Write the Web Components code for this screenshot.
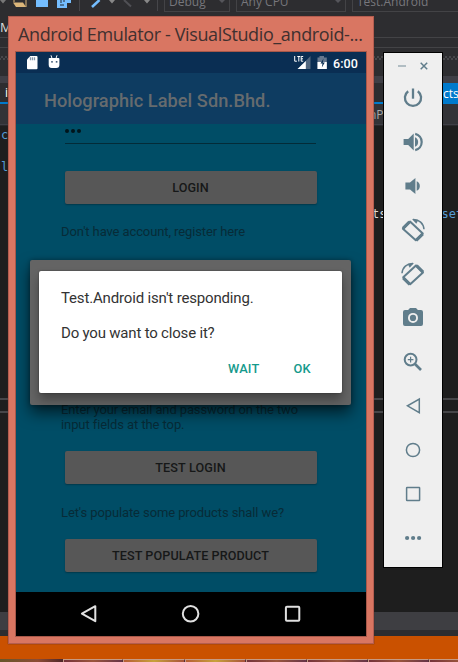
<!DOCTYPE html>
<html lang="en">
<head>
<meta charset="utf-8">
<title>Android Emulator</title>
<style>
html,body{margin:0;width:458px;height:662px;overflow:hidden;background:#1e1e1e}
</style>
</head>
<body>
<desk-top></desk-top>
<script>
const define = (name, html, after) => customElements.define(name, class extends HTMLElement {
  constructor() {
    super();
    const t = document.createElement('template');
    t.innerHTML = html;
    this.attachShadow({mode: 'open'}).append(t.content.cloneNode(true));
  }
  connectedCallback() { if (after) after(this); }
});

// A single line of text, tracked so that it spans the width given in "w".
define('fit-text', `<style>:host{display:inline-block;white-space:pre}</style><span><slot></slot></span>`, el => {
  const w = parseFloat(el.getAttribute('w'));
  const n = el.textContent.length;
  const now = el.shadowRoot.querySelector('span').getBoundingClientRect().width;
  if (now) { el.style.letterSpacing = (w - now) / n + 'px'; }
});

const icons = {
  power: '<g fill="none" stroke="currentColor" stroke-width="2.3"><path d="M7.2 5.2A8.1 8.1 0 1 0 16.8 5.2"/><path d="M12 2.5v10.2"/></g>',
  louder: '<g fill="currentColor"><path d="M2.6 8.9h4.6L12.7 3.6v16.8L7.2 15.1H2.6z"/><path d="M14 7.2c4.2 1.4 4.2 8.200 0 9.600z"/></g><path d="M14.2 3.9a8.300 8.300 0 0 1 0 16.2" fill="none" stroke="currentColor" stroke-width="2.2"/>',
  quieter: '<g fill="currentColor"><path d="M4.4 8.600h4.600L14.400 3.900v16.2L9 15.400H4.400z"/><path d="M15.700 7.200c4.200 1.400 4.200 8.200 0 9.600z"/></g>',
  left: '<g fill="none" stroke="currentColor"><path d="M9 3.600L1.900 10.700L14.800 22.300L21.800 15.400z" stroke-width="2" stroke-linejoin="round"/><path d="M8.500 3.800L2 10.300M21.800 15.800L15.200 22.300" stroke-width="3.200"/><path d="M12 1.500C18 1.200 22.600 5.600 23 11.200" stroke-width="1.500"/></g><path d="M11 1l6.300 1.100-2 3.700z" fill="currentColor"/>',
  right: '<g fill="none" stroke="currentColor"><path d="M15 3.400L22 10.400L9.200 22.300L2.200 15.300z" stroke-width="2" stroke-linejoin="round"/><path d="M15.500 3.600L22 10.100M2.200 15.800L8.800 22.300" stroke-width="3.200"/><path d="M12 1.500C6 1.200 1.400 5.600 1 11.200" stroke-width="1.500"/></g><path d="M13 1L6.700 2.100l2 3.700z" fill="currentColor"/>',
  camera: '<path fill="currentColor" fill-rule="evenodd" d="M9 2h6l1.900 2H20q2 0 2 2v12q0 2-2 2H4q-2 0-2-2V6q0-2 2-2h3.100zM12 6.900a5 5 0 1 0 0 10a5 5 0 0 0 0-10z"/><circle cx="12" cy="11.900" r="3.100" fill="currentColor"/>',
  zoom: '<g fill="none" stroke="currentColor"><circle cx="9.600" cy="9.600" r="5.900" stroke-width="2"/><path d="M14 14l6 6" stroke-width="2.600"/><path d="M6.800 9.600h5.600M9.600 6.800v5.600" stroke-width="1.200"/></g>',
  back: '<path d="M18.300 5v13.600L6.500 11.800z" fill="none" stroke="currentColor" stroke-width="1.500"/>',
  home: '<circle cx="12" cy="12" r="6.600" fill="none" stroke="currentColor" stroke-width="1.500"/>',
  square: '<rect x="5.600" y="5.500" width="13" height="13" rx=".5" fill="none" stroke="currentColor" stroke-width="1.500"/>',
  more: '<g fill="currentColor"><circle cx="6.100" cy="12" r="2.100"/><circle cx="12.100" cy="12" r="2.100"/><circle cx="18.100" cy="12" r="2.100"/></g>',
  navback: '<path d="M18.300 4.200v15L4.900 11.700z" fill="none" stroke="currentColor" stroke-width="2" stroke-linejoin="round"/>',
  navhome: '<circle cx="11.600" cy="11.700" r="7.800" fill="none" stroke="currentColor" stroke-width="2"/>',
  navsquare: '<rect x="4.900" y="4.700" width="13.400" height="14" rx="1" fill="none" stroke="currentColor" stroke-width="2"/>',
};
define('line-icon', `<style>:host{display:block;width:24px;height:24px}svg{display:block}</style>`, el => {
  el.shadowRoot.innerHTML += `<svg width="24" height="24" viewBox="0 0 24 24">${icons[el.getAttribute('name')]}</svg>`;
});

define('app-button', `<style>
:host{display:flex;box-sizing:border-box;width:252px;height:32.500px;margin-left:48.500px;align-items:center;justify-content:center;
background:#575757;border-radius:2px;box-shadow:0 1px 1.500px #00263288;color:#161818;font:500 12.600px/16px Roboto,sans-serif;padding-top:2px}
</style><slot></slot>`);

define('app-label', `<style>:host{display:block;margin-left:45px;height:15px;font:400 13px/15px Roboto,sans-serif;color:#072b37}</style><slot></slot>`);

define('status-bar', `<style>
:host{display:flex;height:21px;background:#0a2e53;align-items:center;color:#fff;font:500 12.500px/21px Roboto,sans-serif}
svg{display:block}.left{flex:1}fit-text{margin-right:8px;padding-top:1px}
</style>
<svg class="left" height="21" viewBox="0 0 278 21" preserveAspectRatio="xMinYMid meet">
<path fill="#fff" d="M14.300 4H20.500q1 0 1 1V16.200q0 1-1 1H12q-1 0-1-1V7.400z"/><path d="M14.500 5.200v3M16.500 5.200v3M18.500 5.200v3" stroke="#8595aa" stroke-width="1.300"/>
<path fill="#fff" d="M33.400 6h9.200q.800 0 .800 1v5.800q0 3.200-3.200 3.200h-4.500q-3 0-3-3.200V7q0-1 .700-1z"/><path d="M35 3.300l1 3M41 3.300l-1 3" stroke="#fff"/><path d="M35.200 9.800h1.600M39.800 9.800h1.600" stroke="#0a2e53" stroke-width="1.300"/>
</svg>
<svg width="39" height="21" viewBox="0 0 39 21">
<path d="M16.500 4v13H4z" fill="#51677f"/><path d="M11.800 9v8H3.500z" fill="#fff"/>
<path d="M.7 4v5.200h2.200M3.300 4.500h3M4.800 4.500v5M9.200 4.500H7.200v4.700h2M7.200 6.800h1.800" fill="none" stroke="#fff"/>
<path d="M23.500 5.500h2V4h4.500v1.500h2.800V17H23.500z" fill="#65788f"/><path d="M23.500 10h9.300v7h-9.300z" fill="#fff"/><path d="M29.500 6.500l-3 5h2l-.700 4 3-5h-2z" fill="#0a2e53"/>
</svg>
<fit-text w="25">6:00</fit-text>`);

define('nav-bar', `<style>:host{display:flex;height:44px;background:#000;color:#e0e0e0;justify-content:space-between;padding:10px 61px 0;box-sizing:border-box}</style>
<line-icon name="navback"></line-icon><line-icon name="navhome"></line-icon><line-icon name="navsquare"></line-icon>`);

define('alert-dialog', `<style>
:host{display:block;width:303px;height:122px;box-sizing:border-box;background:#fff;border-radius:2px;padding:19px 22px 0;
box-shadow:0 7px 11px #0005,0 0 2px #0006;font:400 15px/17.500px Roboto,sans-serif;color:#333}
p{margin:0 0 17px}
.acts{display:flex;justify-content:flex-end;gap:34px;margin:19px 9px 0 0;font:500 12.800px/16px Roboto,sans-serif;color:#159a8c}
</style>
<p><fit-text w="192.500">Test.Android isn't responding.</fit-text></p>
<p><fit-text w="153.500">Do you want to close it?</fit-text></p>
<div class="acts"><fit-text w="31.500">WAIT</fit-text><fit-text w="17.500">OK</fit-text></div>`);

define('phone-screen', `<style>
:host{display:flex;flex-direction:column;position:relative;width:350px;height:584px;overflow:hidden;background:#004d66}
header{height:51px;box-sizing:border-box;background:#0e3c61;padding:16.500px 0 0 28px;font:500 18.200px/22px Roboto,sans-serif;color:#666b6e}
main{flex:1;display:flex;flex-direction:column;min-height:0}
.entry{width:251px;height:20px;box-sizing:border-box;margin:0 0 27px 49px;border-bottom:1px solid #032b38;display:flex;gap:2px;padding-top:5px}
.entry i{width:4px;height:4px;border-radius:2px;background:#00151c}
.scrim{position:absolute;left:14px;top:207.500px;width:321px;height:145.500px;box-sizing:border-box;border-radius:2px;background:#646464;box-shadow:0 8px 15px #0009,0 0 4px #0005;padding:11.500px 0 0 9px}
</style>
<status-bar></status-bar>
<header><fit-text w="226.500">Holographic Label Sdn.Bhd.</fit-text></header>
<main>
<div class="entry"><i></i><i></i><i></i></div>
<app-button><fit-text w="36.500">LOGIN</fit-text></app-button>
<app-label style="margin-top:20px;margin-bottom:163px"><fit-text w="184">Don't have account, register here</fit-text></app-label>
<app-label><fit-text w="237">Enter your email and password on the two</fit-text></app-label>
<app-label style="margin-bottom:19.500px"><fit-text w="123">input fields at the top.</fit-text></app-label>
<app-button><fit-text w="70.500">TEST LOGIN</fit-text></app-button>
<app-label style="margin:21px 0 19.500px 45px"><fit-text w="223">Let's populate some products shall we?</fit-text></app-label>
<app-button><fit-text w="157">TEST POPULATE PRODUCT</fit-text></app-button>
</main>
<nav-bar></nav-bar>
<div class="scrim"><alert-dialog></alert-dialog></div>`);

define('emulator-window', `<style>
:host{display:block;box-sizing:border-box;width:366px;height:628px;background:#d97662;border:1px solid #b45d50;box-shadow:0 0 1px #4a2a26}
h1{margin:0;height:34px;padding:4px 0 0 9px;box-sizing:border-box;font:400 18px/27px "Open Sans",sans-serif;color:#40302f}
.frame{margin-left:6px;width:350px;border:1px solid #a85849}
</style><h1><fit-text w="344.500">Android Emulator - VisualStudio_android-...</fit-text></h1><div class="frame"><phone-screen></phone-screen></div>`);

define('emulator-tools', `<style>
:host{display:flex;flex-direction:column;box-sizing:border-box;width:60px;height:516px;background:#efefef;border:1px solid #000;color:#607d8b}
.win{height:32px;padding:8px 0 0 14px;box-sizing:border-box}.win svg{display:block}
.list{display:flex;flex-direction:column;gap:20px;padding-left:17px;margin-top:1px}
</style>
<div class="win"><svg width="32" height="12" viewBox="0 0 32 12"><path d="M0 5h8" stroke="#9cadb5" stroke-width="1.500"/><path d="M22.700 1.700l6.500 6.500M29.200 1.700L22.700 8.200" stroke="#607d8b" stroke-width="1.500"/></svg></div>
<div class="list">${['power','louder','quieter','left','right','camera','zoom','back','home','square','more'].map(n => `<line-icon name="${n}"></line-icon>`).join('')}</div>`);

define('ide-window', `<style>
:host{display:flex;flex-direction:column;width:458px;height:662px;background:#1e1e1e;font:12px/14px "Open Sans",sans-serif;color:#ccc;overflow:hidden}
div{box-sizing:border-box;flex:none}
.bar{height:16px;background:#2d2d30;display:flex;color:#77777c}
.bar svg{flex:none}
.box{border:1px solid #434346;border-top:0;height:12px;display:flex;padding-left:4px;margin-right:6px;justify-content:space-between}
.box span{margin-top:-5px;height:16px;line-height:14px}
.box b{border:4px solid transparent;border-top-color:#55555a;height:0;margin:-1px 3px 0 0}
.menu{height:22px;background:#2d2d30;border-bottom:1px solid #434346;font-size:13px;color:#ddd;padding-top:4px}
.m2{height:10px;background:#2d2d30;border-bottom:1px solid #434346}
.grip{height:28px;background:radial-gradient(circle,#56565b 0 .6px,transparent .9px) 0 7px/4px 4px repeat-x,radial-gradient(circle,#56565b 0 .6px,transparent .9px) 2px 9px/4px 4px repeat-x #2d2d30}
.band{height:7px;background:#3f3f46}
.tabs{height:21px;background:#2d2d30;border-bottom:2px solid #007acc;display:flex;justify-content:space-between;color:#fff}
.tabs span:last-child{background:#007acc;width:16px;height:21px;line-height:22px;padding-left:1px;box-sizing:border-box}
.tabs span:first-child{padding:3px 0 0 5px}
.nav{height:20px;background:#333337;padding:4px 0 0 369px;color:#aaa}
.edge{height:2px;background:#3f3f46;border-bottom:1px solid #29292c}
.code{height:272px;font:12px/14px "DejaVu Sans Mono",monospace;color:#569cd6;padding-top:2px;display:flex;flex-direction:column}
.code div{height:32px}.code .late{height:20px;margin-top:15px;display:flex;padding-left:372px;color:#ddd}
.late span{color:#569cd6;margin-left:55px}
.split{height:15px;border:solid #464649;border-width:2px 0}
.rest{height:199px}.scroll{height:18px;background:#3e3e42}.gap{height:6px;background:#2d2d30}
.status{height:23px;background:#ca5100}
.thumbs{height:3px;display:grid;grid-template-columns:63px 60px 62px 61px 61px 61px 61px 61px;background:#7c3934}
.thumbs i{border:1px solid #c69a83;border-bottom:0;border-right-color:#563038;background:linear-gradient(90deg,#74323a,#9b553b,#663447)}
.thumbs i:nth-child(1){border:0;background:linear-gradient(90deg,#66562a,#8c4b34 60%,#4e2729)}.thumbs i:nth-child(3),.thumbs i:nth-child(4){background:linear-gradient(90deg,#b75e35,#c7a23b,#a95339)}
</style>
<div class="bar"><svg width="164" height="16" viewBox="0 0 164 16"><path d="M0 0h6L3 3.500z" fill="#777"/><path d="M13 2.500h10l3 4.500H16z" fill="#dcb67a"/><path d="M14 0v2M26 0v7" stroke="#dcb67a"/><path d="M36 0h12v7H36z" fill="#75beff"/><path d="M57 0h14v3h-4v5H57z" fill="#75beff"/><path d="M61 0v3M64 0v2M60 5h4" stroke="#252b32"/><path d="M79.500 0v11M157.500 0v11" stroke="#46464a"/><path d="M99.500 0L92 7" stroke="#75beff" stroke-width="2.500"/><path d="M109 0h6l-3 3.500zM144 0h6l-3 3.500z" fill="#888"/><path d="M124 0l7 6.500" stroke="#505055" stroke-width="2"/></svg>
<div class="box" style="width:66px"><span>Debug</span><b></b></div><div class="box" style="width:110px"><span>Any CPU</span><b></b></div><div class="box" style="width:120px;margin:0"><span>Test.Android</span></div></div>
<div class="menu">M</div><div class="m2"></div><div class="grip"></div><div class="band"></div>
<div class="tabs"><span>i</span><span>cts</span></div>
<div class="nav">nP</div><div class="edge"></div>
<div class="code"><div style="padding-left:1px">c</div><div style="padding-left:1px">l</div><div class="late">ts<span>set</span></div></div>
<div class="split"></div><div class="rest"></div><div class="scroll"></div><div class="gap"></div><div class="status"></div>
<div class="thumbs"><i></i><i></i><i></i><i></i><i></i><i></i><i></i><i></i></div>`);

define('desk-top', `<style>
:host{display:block;position:relative;width:458px;height:662px;overflow:hidden}
emulator-window{position:absolute;left:8px;top:16px}
emulator-tools{position:absolute;left:383px;top:52px}
</style><ide-window></ide-window><emulator-window></emulator-window><emulator-tools></emulator-tools>`);
</script>
</body>
</html>
